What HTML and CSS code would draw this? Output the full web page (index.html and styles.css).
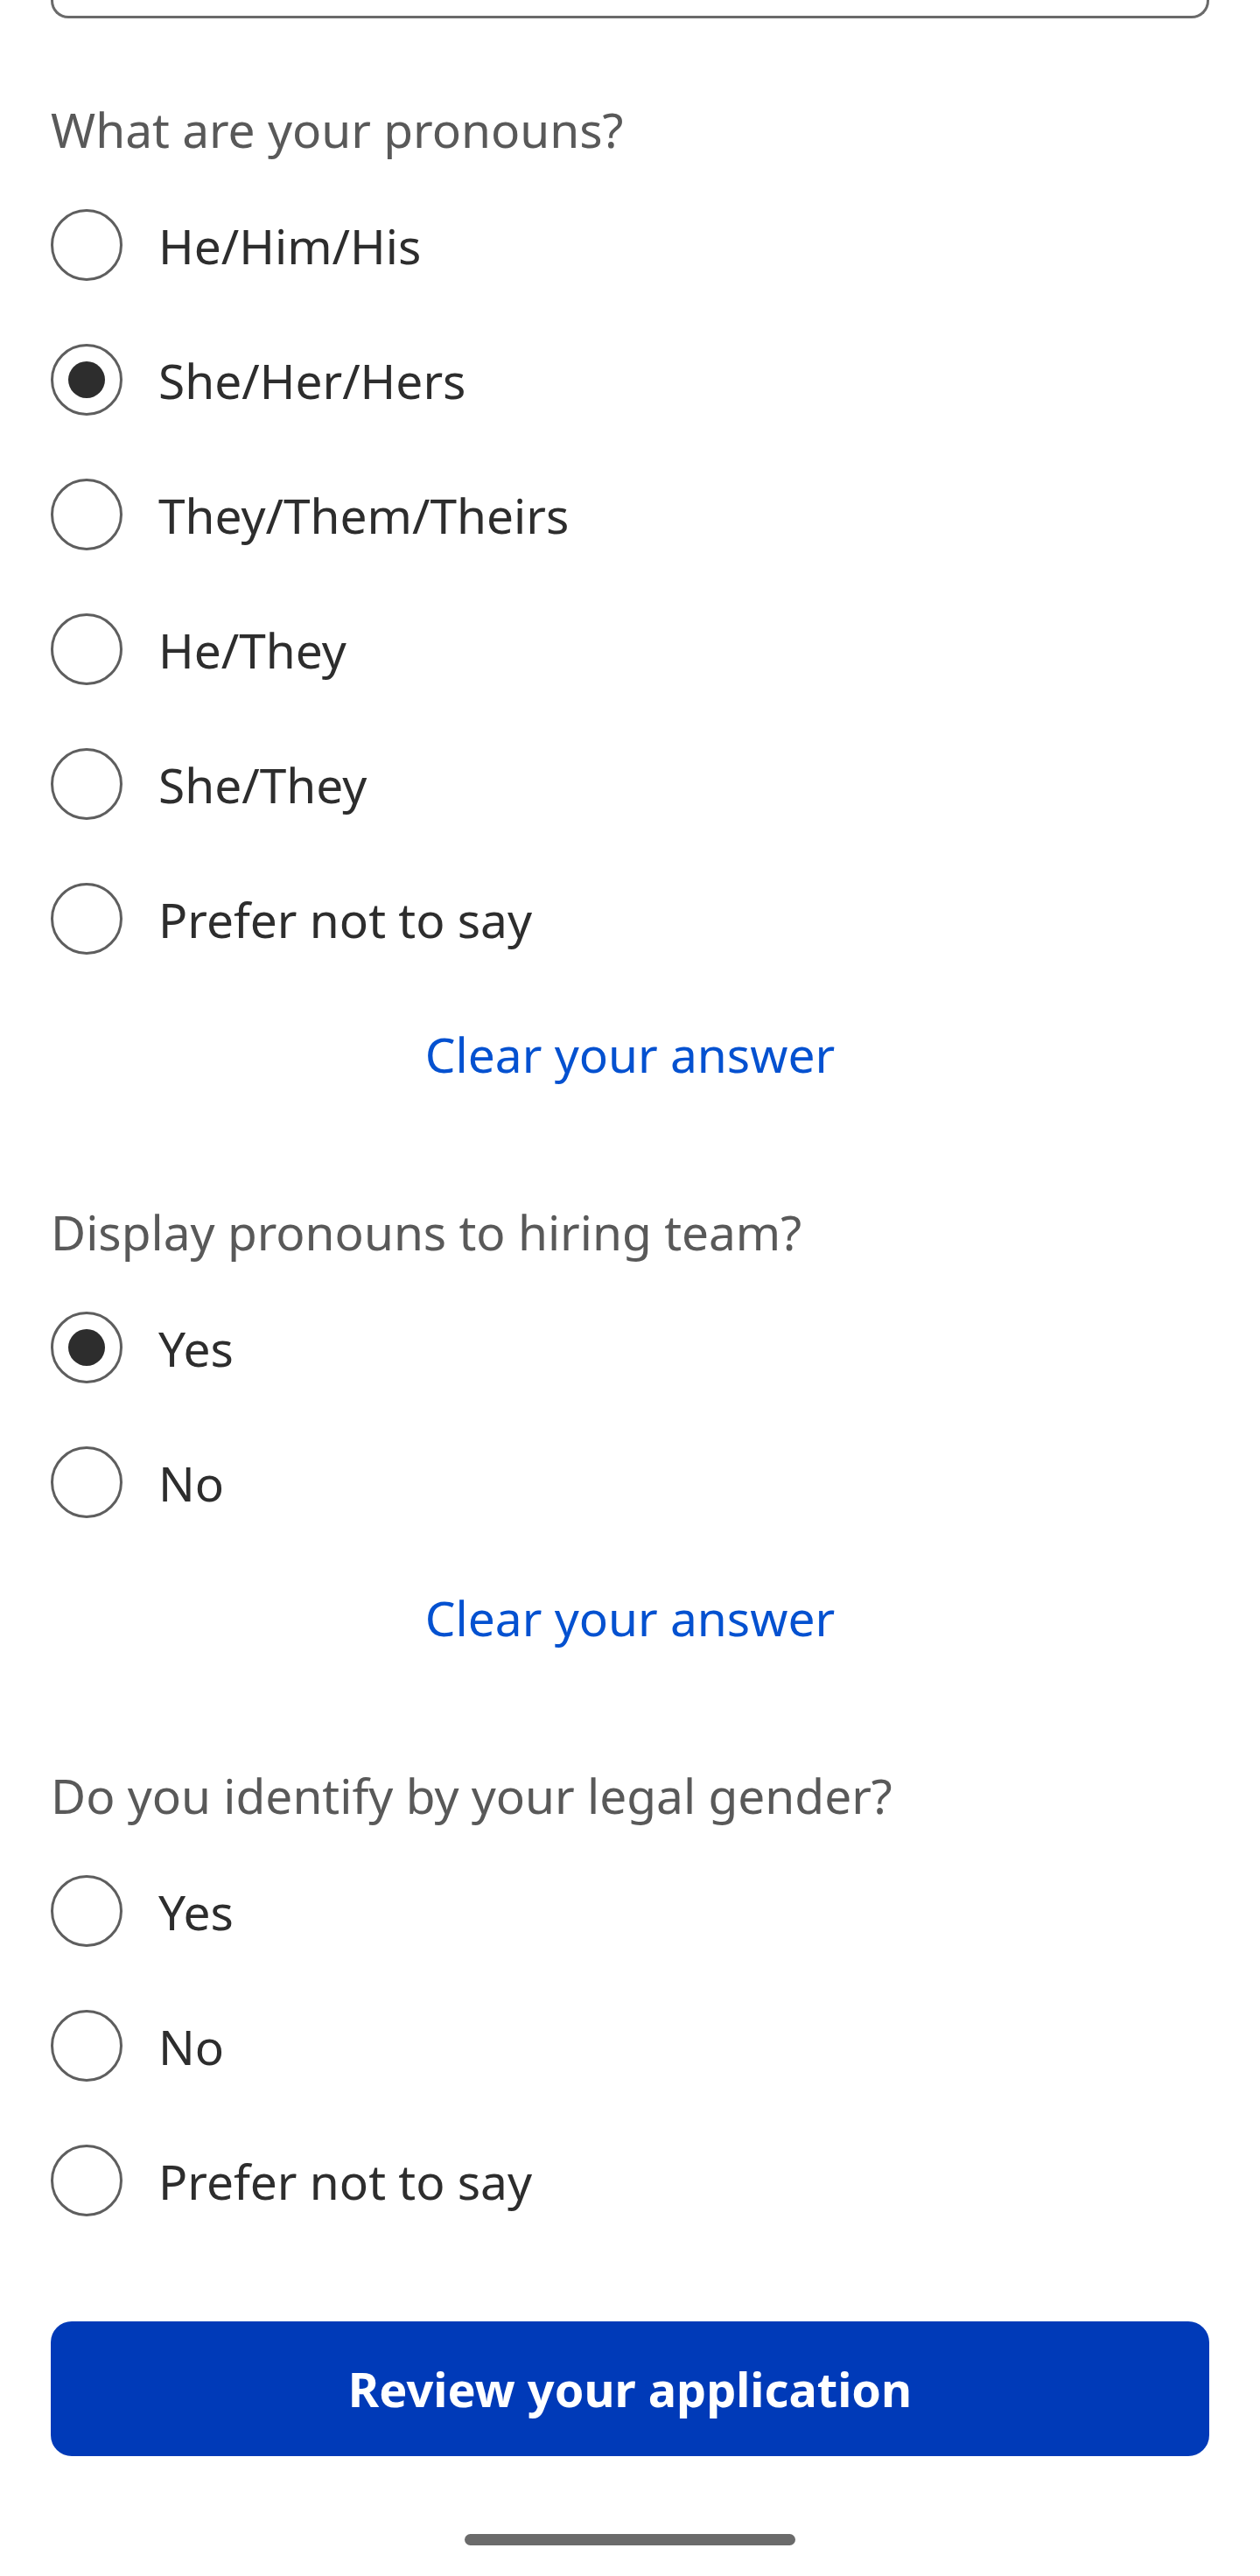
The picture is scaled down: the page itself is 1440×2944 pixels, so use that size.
FILE: index.html
```html
<!DOCTYPE html>
<html lang="en">
<head>
<meta charset="utf-8">
<title>Application questions</title>
<link rel="stylesheet" href="styles.css">
</head>
<body>
<main class="page">
  <div class="field-end"></div>

  <section class="question">
    <p class="q-label">What are your pronouns?</p>
    <div class="options">
      <label class="option"><span class="radio"></span><span class="opt-text">He/Him/His</span></label>
      <label class="option"><span class="radio checked"></span><span class="opt-text">She/Her/Hers</span></label>
      <label class="option"><span class="radio"></span><span class="opt-text">They/Them/Theirs</span></label>
      <label class="option"><span class="radio"></span><span class="opt-text">He/They</span></label>
      <label class="option"><span class="radio"></span><span class="opt-text">She/They</span></label>
      <label class="option"><span class="radio"></span><span class="opt-text">Prefer not to say</span></label>
    </div>
    <div class="clear-row"><a class="clear-link" href="#">Clear your answer</a></div>
  </section>

  <section class="question">
    <p class="q-label">Display pronouns to hiring team?</p>
    <div class="options">
      <label class="option"><span class="radio checked"></span><span class="opt-text">Yes</span></label>
      <label class="option"><span class="radio"></span><span class="opt-text">No</span></label>
    </div>
    <div class="clear-row"><a class="clear-link" href="#">Clear your answer</a></div>
  </section>

  <section class="question">
    <p class="q-label">Do you identify by your legal gender?</p>
    <div class="options">
      <label class="option"><span class="radio"></span><span class="opt-text">Yes</span></label>
      <label class="option"><span class="radio"></span><span class="opt-text">No</span></label>
      <label class="option"><span class="radio"></span><span class="opt-text">Prefer not to say</span></label>
    </div>
  </section>

  <button class="primary-btn" type="button">Review your application</button>

  <div class="home-bar-wrap"><span class="home-bar"></span></div>
</main>
</body>
</html>
```

FILE: styles.css
```css
* {
  box-sizing: border-box;
}

html, body {
  margin: 0;
  padding: 0;
  background: #ffffff;
}

body {
  font-family: "Noto Sans", "Open Sans", "Liberation Sans", sans-serif;
  font-size: 55px;
  color: #2d2d2d;
}

.page {
  width: 1440px;
  height: 2944px;
  padding: 0 58px;
  display: flex;
  flex-direction: column;
}

.field-end {
  height: 21px;
  border: 3px solid #6a6a6a;
  border-top: none;
  border-radius: 0 0 20px 20px;
  flex: none;
}

.question {
  margin-top: 86px;
  display: flex;
  flex-direction: column;
}

.q-label {
  margin: 0 0 15px 0;
  line-height: 81px;
  color: #595959;
  font-size: 55px;
}

.options {
  display: flex;
  flex-direction: column;
}

.option {
  height: 154px;
  display: flex;
  align-items: center;
  gap: 41px;
  line-height: 81px;
}

.radio {
  width: 82px;
  height: 82px;
  border: 3px solid #5e5e5e;
  border-radius: 50%;
  flex: none;
  display: flex;
  align-items: center;
  justify-content: center;
}

.radio.checked::after {
  content: "";
  width: 42px;
  height: 42px;
  border-radius: 50%;
  background: #2d2d2d;
}

.opt-text {
  color: #2d2d2d;
}

.clear-row {
  height: 154px;
  display: flex;
  align-items: center;
  justify-content: center;
  line-height: 81px;
}

.clear-link {
  color: #0451d0;
  text-decoration: none;
}

.primary-btn {
  margin-top: 84px;
  height: 154px;
  width: 100%;
  border: none;
  border-radius: 24px;
  background: #003ab8;
  color: #ffffff;
  font-family: "Noto Sans", "Open Sans", "Liberation Sans", sans-serif;
  font-size: 54px;
  font-weight: 700;
  flex: none;
}

.home-bar-wrap {
  margin-top: 89px;
  display: flex;
  justify-content: center;
}

.home-bar {
  width: 378px;
  height: 13px;
  border-radius: 7px;
  background: #6b6b6b;
}
```
